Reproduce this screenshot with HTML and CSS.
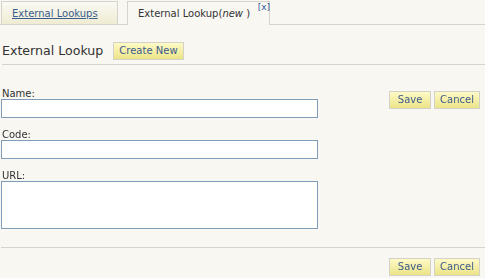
FILE: index.html
```html
<!DOCTYPE html>
<html lang="en">
<head>
  <meta charset="UTF-8">
  <title>External Lookup</title>
  <link rel="stylesheet" href="styles.css">
</head>
<body>
  <div class="tabs">
    <div class="tab"><a href="#">External Lookups</a></div>
    <div class="tab active">External Lookup(<i>new</i> )<span class="close">[x]</span></div>
  </div>

  <div class="title-row">
    <h2>External Lookup</h2>
    <button class="btn">Create New</button>
  </div>

  <div class="form">
    <div class="fields">
      <div class="field">
        <label for="name">Name:</label>
        <input type="text" id="name" autofocus>
      </div>
      <div class="field">
        <label for="code">Code:</label>
        <input type="text" id="code">
      </div>
      <div class="field">
        <label for="url">URL:</label>
        <textarea id="url"></textarea>
      </div>
    </div>
    <div class="actions">
      <button class="btn save">Save</button>
      <button class="btn">Cancel</button>
    </div>
  </div>

  <div class="footer">
    <button class="btn save">Save</button>
    <button class="btn">Cancel</button>
  </div>
</body>
</html>
```

FILE: styles.css
```css
body {
  margin: 0;
  background: #f8f7f2;
  font-family: 'DejaVu Sans', Verdana, sans-serif;
  font-size: 10px;
  color: #333;
}
.tabs {
  display: flex;
  align-items: flex-end;
  height: 24px;
  border-bottom: 1px solid #d5d3cb;
  padding-left: 1px;
  gap: 9px;
}
.tab {
  box-sizing: border-box;
  height: 23px;
  width: 117px;
  border: 1px solid #d5d3cb;
  border-bottom: none;
  padding: 6px 0 0 10px;
  line-height: 12px;
  white-space: nowrap;
  background: linear-gradient(#faf9f4, #efecd2);
}
.tab a {
  color: #3a5d8f;
}
.tab.active {
  position: relative;
  width: 143px;
  height: 24px;
  margin-bottom: -1px;
  background: #f8f7f2;
  color: #333;
}
.close {
  position: absolute;
  top: 0;
  right: -1px;
  font-size: 9px;
  line-height: 10px;
  color: #2f5a9a;
}
.title-row {
  display: flex;
  align-items: center;
  height: 18px;
  margin: 17px 0 0 2px;
  gap: 10px;
}
h2 {
  margin: 0;
  font-size: 12.6px;
  font-weight: normal;
  line-height: 18px;
  color: #333;
}
.btn {
  height: 18px;
  min-width: 42px;
  padding: 0 5px;
  border: 1px solid #d3d1c9;
  background: linear-gradient(#fdfac6, #ece488);
  color: #3d5b8c;
  font-family: 'DejaVu Sans', Verdana, sans-serif;
  font-size: 10px;
  line-height: 16px;
  cursor: pointer;
}
.form {
  display: flex;
  justify-content: space-between;
  margin: 4px 0 0 2px;
  padding: 24px 5px 0 0;
  border-top: 1px solid #d5d3cb;
}
.fields {
  width: 316px;
  margin-left: -1px;
}
.field + .field {
  margin-top: 12px;
}
.field label {
  display: block;
  padding-left: 1px;
  line-height: 10px;
  color: #333;
}
.field input, .field textarea {
  display: block;
  box-sizing: border-box;
  width: 317px;
  height: 19px;
  margin: 0;
  border: 1px solid #7f9db9;
  background: #fff;
  font-family: 'DejaVu Sans', Verdana, sans-serif;
  font-size: 10px;
  padding: 1px 3px;
  outline: none;
}
.field textarea {
  height: 48px;
  resize: none;
}
.actions {
  display: flex;
  gap: 3px;
  margin-top: 2px;
}
.footer {
  display: flex;
  justify-content: flex-end;
  gap: 3px;
  margin: 18px 0 0 1px;
  padding: 10px 5px 0 0;
  border-top: 1px solid #d5d3cb;
}
```
